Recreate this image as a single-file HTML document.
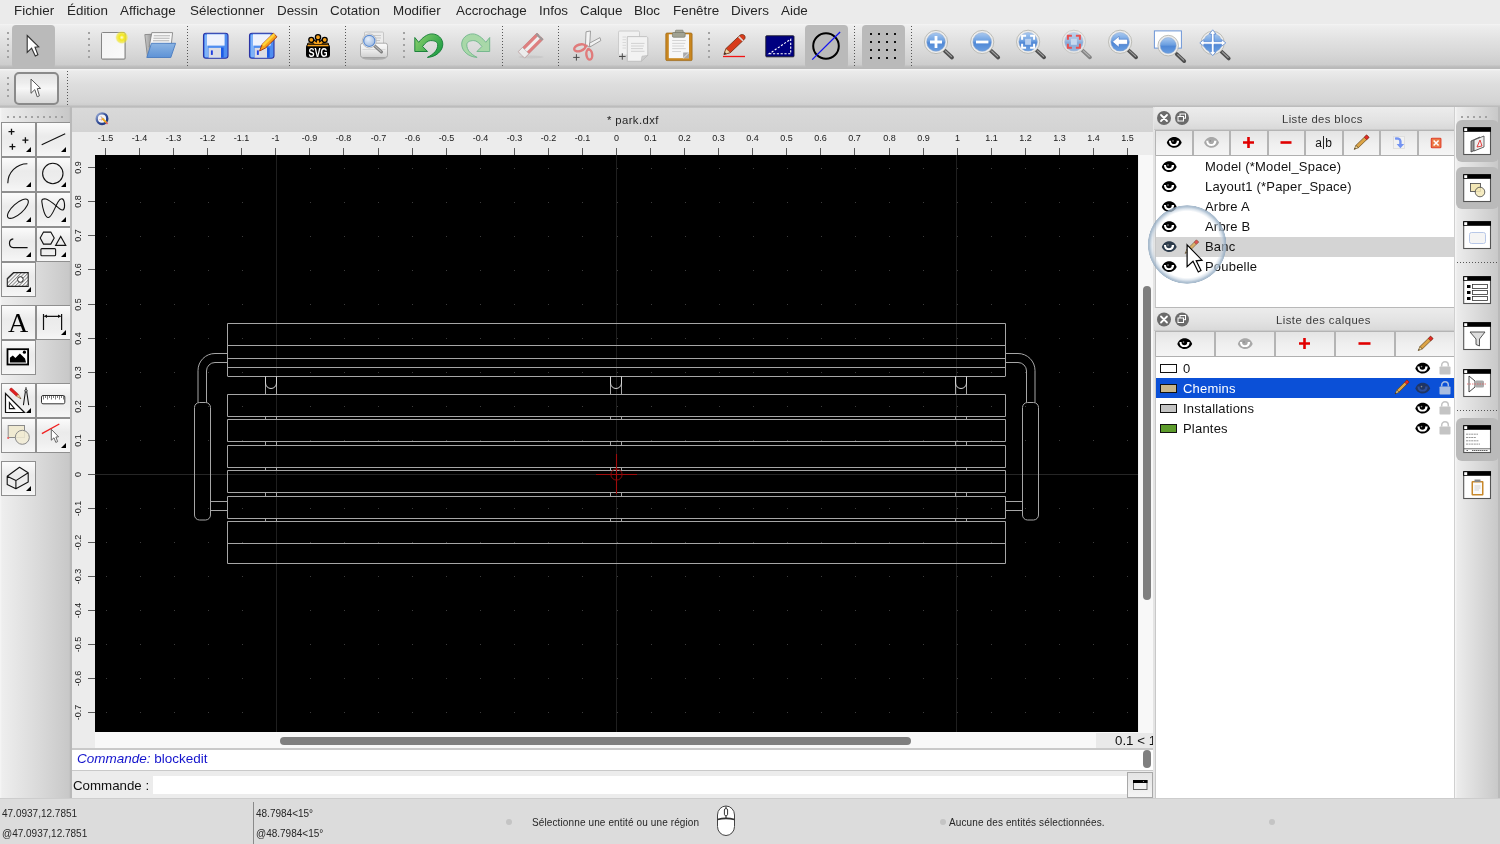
<!DOCTYPE html>
<html><head><meta charset="utf-8"><title>LibreCAD - park.dxf</title><style>
*{box-sizing:border-box;margin:0;padding:0}
html,body{width:1500px;height:844px;overflow:hidden;background:#ececec;font-family:"Liberation Sans",sans-serif}
body{position:relative}
.a{position:absolute}
.t{position:absolute;white-space:nowrap;line-height:1;will-change:transform}
svg{position:absolute;overflow:visible;will-change:transform}
#menubar{left:0;top:0;width:1500px;height:24px;background:#ebebeb}
#menubar .t{top:4px;font-size:13.4px;color:#262626}
#tb1{left:0;top:24px;width:1500px;height:44px;background:linear-gradient(#f4f4f4 0,#eeeeee 4%,#e2e2e2 35%,#d6d6d6 70%,#cdcdcd 92%,#c0c0c0 96%,#b8b8b8 100%)}
#tb2{left:0;top:68px;width:1500px;height:40px;background:linear-gradient(#b9b9b9 0,#b9b9b9 1px,#f7f7f7 1px,#f1f1f1 2px,#ebebeb 3px,#dedede 40%,#d4d4d4 85%,#cfcfcf 92%,#bdbdbd 95%,#bbbbbb 100%)}
.hdl{position:absolute;width:2px;background:radial-gradient(circle at 1px 1px,#a2a2a2 1px,transparent 1.2px) 0 0/2px 6px}
.hdlh{position:absolute;height:2px;background:radial-gradient(circle at 1px 1px,#a2a2a2 1px,transparent 1.2px) 0 0/6px 2px}
.sep{position:absolute;width:1px;background:linear-gradient(#555 50%,transparent 50%) 0 0/1px 3px}
.seph{position:absolute;height:1px;background:linear-gradient(90deg,#555 50%,transparent 50%) 0 0/3px 1px}
.pressed{position:absolute;background:#bababa;border-radius:5px}
#left{left:0;top:107px;width:71px;height:691px;background:linear-gradient(90deg,#f6f6f6 0,#eeeeee 2px,#d9d9d9 40px,#c8c8c8 69px,#b8b8b8 71px)}
.cell{position:absolute;width:36px;height:36px;border:1px solid #8f8f8f;background:linear-gradient(#fbfbfb,#ebebeb 40%,#eeeeee 70%,#f6f6f6)}
.tri{position:absolute;width:0;height:0;border-left:7px solid transparent;border-bottom:7px solid #000}
#status{left:0;top:799px;width:1500px;height:45px;background:#dcdcdc}
.st{font-size:10px;color:#262626}
</style></head><body>
<div id="menubar" class="a">
<span class="t" style="left:14px">Fichier</span>
<span class="t" style="left:67px">Édition</span>
<span class="t" style="left:120px">Affichage</span>
<span class="t" style="left:190px">Sélectionner</span>
<span class="t" style="left:277px">Dessin</span>
<span class="t" style="left:330px">Cotation</span>
<span class="t" style="left:393px">Modifier</span>
<span class="t" style="left:456px">Accrochage</span>
<span class="t" style="left:539px">Infos</span>
<span class="t" style="left:580px">Calque</span>
<span class="t" style="left:634px">Bloc</span>
<span class="t" style="left:673px">Fenêtre</span>
<span class="t" style="left:731px">Divers</span>
<span class="t" style="left:781px">Aide</span>
</div>
<div id="tb1" class="a"></div><div id="tb2" class="a"></div>
<div class="hdl" style="left:7px;top:32px;height:30px"></div>
<div class="hdl" style="left:88px;top:32px;height:30px"></div>
<div class="hdl" style="left:403px;top:32px;height:30px"></div>
<div class="hdl" style="left:708px;top:32px;height:30px"></div>
<div class="sep" style="left:187px;top:26px;height:41px"></div>
<div class="sep" style="left:289px;top:26px;height:41px"></div>
<div class="sep" style="left:345px;top:26px;height:41px"></div>
<div class="sep" style="left:502px;top:26px;height:41px"></div>
<div class="sep" style="left:558px;top:26px;height:41px"></div>
<div class="sep" style="left:854px;top:26px;height:41px"></div>
<div class="sep" style="left:911px;top:26px;height:41px"></div>
<div class="pressed" style="left:12px;top:25px;width:43px;height:43px;border-radius:4px"></div>
<div class="pressed" style="left:805px;top:25px;width:43px;height:43px;border-radius:4px"></div>
<div class="pressed" style="left:862px;top:25px;width:43px;height:43px;border-radius:4px"></div>
<svg style="left:20px;top:30px" width="25" height="30" viewBox="20 30 25 30" ><path d="M27.2,35.5 L38.7,46.9 L35,47.2 L37.9,54.8 L35.3,56.1 L31.6,48.2 L27.2,52.4 Z" fill="#fff" stroke="#333" stroke-width="1.1" stroke-linejoin="miter"/></svg>
<svg style="left:96px;top:28px" width="36" height="36" viewBox="96 28 36 36" ><defs><radialGradient id="glow"><stop offset="0" stop-color="#fffde0"/><stop offset="0.35" stop-color="#f4e81a"/><stop offset="0.75" stop-color="#efe31e" stop-opacity="0.6"/><stop offset="1" stop-color="#eee" stop-opacity="0"/></radialGradient>
<linearGradient id="pg" x1="0" y1="0" x2="1" y2="1"><stop offset="0" stop-color="#f2f2f2"/><stop offset="1" stop-color="#fafafa"/></linearGradient></defs>
<rect x="101.5" y="33.5" width="24" height="26" rx="1" fill="#999"/>
<rect x="101.5" y="32.5" width="23.5" height="26.5" rx="1" fill="url(#pg)" stroke="#858585" stroke-width="1"/>
<circle cx="121.8" cy="37.5" r="7" fill="url(#glow)"/></svg>
<svg style="left:140px;top:28px" width="40" height="34" viewBox="140 28 40 34" ><defs><linearGradient id="fg" x1="0" y1="0" x2="0" y2="1"><stop offset="0" stop-color="#8db5e3"/><stop offset="1" stop-color="#5d92d6"/></linearGradient>
<linearGradient id="bg2" x1="0" y1="0" x2="1" y2="0"><stop offset="0" stop-color="#c9c9c9"/><stop offset="1" stop-color="#8f8f8f"/></linearGradient></defs>
<path d="M144.8,34.6 L153,34.2 L150,56.5 L147.5,57.2 Z" fill="url(#bg2)" stroke="#727272" stroke-width="0.7" stroke-linejoin="round"/>
<path d="M151.8,32.6 L172.6,32.6 L171.4,43.4 L149.2,47 Z" fill="#f6f6f6" stroke="#7b7b7b" stroke-width="0.8" stroke-linejoin="round"/>
<path d="M153.8,35.8 L170,35.8 M153.4,38.3 L169.6,38.3 M153,40.8 L169.3,40.8" stroke="#b5b5b5" stroke-width="1.1"/>
<path d="M151.4,43.3 L175.6,43.3 L170.8,57.5 L146.8,57.5 Z" fill="url(#fg)" stroke="#4a7cc0" stroke-width="0.9" stroke-linejoin="round"/></svg>
<svg style="left:200px;top:30px" width="32" height="32" viewBox="200 30 32 32" ><rect x="203.5" y="33.3" width="24.5" height="25" rx="2.5" fill="#4f8df0" stroke="#2a33a4" stroke-width="1.1"/>
<rect x="205" y="35" width="3" height="22" fill="#7fb2f7"/>
<rect x="207" y="34.3" width="17.6" height="11.3" fill="#eef2fd"/>
<rect x="208.6" y="47.9" width="12.4" height="9.8" fill="#dcdce4"/>
<rect x="210.9" y="50.4" width="1.9" height="4.5" fill="#1f3fe0"/>
<rect x="221" y="47.5" width="2.6" height="10" fill="#1c5ae6"/></svg>
<svg style="left:246px;top:28px" width="34" height="34" viewBox="246 28 34 34" ><rect x="249.5" y="33.3" width="24.5" height="25" rx="2.5" fill="#4f8df0" stroke="#2a33a4" stroke-width="1.1"/>
<rect x="251" y="35" width="3" height="22" fill="#7fb2f7"/>
<rect x="253" y="34.3" width="17.6" height="11.3" fill="#eef2fd"/>
<rect x="254.6" y="47.9" width="12.4" height="9.8" fill="#dcdce4"/>
<rect x="256.9" y="50.4" width="1.9" height="4.5" fill="#1f3fe0"/>
<rect x="267" y="47.5" width="2.6" height="10" fill="#1c5ae6"/><path d="M259.6,51 L262,44.5 L273.5,33.2 L277,36.8 L265.5,48 Z" fill="#f9a21a" stroke="#a0300f" stroke-width="0.9"/>
<path d="M262,44.5 L273.5,33.2 L275.2,35 L263.8,46.3 Z" fill="#ffd43a"/></svg>
<svg style="left:302px;top:30px" width="32" height="32" viewBox="302 30 32 32" ><g stroke="#000" stroke-width="4.2" stroke-linecap="round"><path d="M318,45L318,37.5M318,45L311.5,40M318,45L324.5,40M318,45L309,44.5M318,45L327,44.5"/></g>
<g stroke="#f7a21b" stroke-width="2.2" stroke-linecap="round"><path d="M318,45L318,37.5M318,45L311.5,40M318,45L324.5,40M318,45L309,44.5M318,45L327,44.5"/></g>
<circle cx="318" cy="37.3" r="2.6" fill="#f7a21b" stroke="#000" stroke-width="1.3"/><circle cx="311.3" cy="39.8" r="2.5" fill="#f7a21b" stroke="#000" stroke-width="1.3"/><circle cx="324.7" cy="39.8" r="2.5" fill="#f7a21b" stroke="#000" stroke-width="1.3"/>
<rect x="306" y="44.3" width="24" height="13.5" rx="3" fill="#000"/><rect x="307.5" y="45" width="21" height="1.3" fill="#f7a21b"/>
<text x="0" y="0" font-family="Liberation Sans" font-weight="bold" font-size="13" fill="#fff" text-anchor="middle" transform="translate(318,56.8) scale(0.7,1)">SVG</text></svg>
<svg style="left:356px;top:28px" width="36" height="36" viewBox="356 28 36 36" ><defs><linearGradient id="prg" x1="0" y1="0" x2="0" y2="1"><stop offset="0" stop-color="#fbfbfb"/><stop offset="0.5" stop-color="#ececec"/><stop offset="1" stop-color="#cfcfcf"/></linearGradient>
<radialGradient id="lg" cx="0.4" cy="0.35" r="0.7"><stop offset="0" stop-color="#e8f0fb"/><stop offset="1" stop-color="#9bb8e0"/></radialGradient></defs>
<rect x="364.5" y="32" width="19" height="14" rx="1" fill="#ececec" stroke="#bdbdbd" stroke-width="0.8"/>
<path d="M372,35.5H381M372,38H381M372,40.5H380" stroke="#c9c9c9" stroke-width="1"/>
<ellipse cx="374" cy="58.3" rx="12" ry="1.6" fill="#8d8d8d" opacity="0.55"/>
<rect x="360.5" y="43.2" width="27" height="14.3" rx="2.2" fill="url(#prg)" stroke="#9a9a9a" stroke-width="0.8"/>
<path d="M362.5,49.5H385.5" stroke="#d2d2d2" stroke-width="0.8"/>
<path d="M374.3,45.6L381.4,51.9" stroke="#7d7d7d" stroke-width="3.2" stroke-linecap="round"/>
<path d="M374.8,45.8L381,51.3" stroke="#b9b9b9" stroke-width="1.1" stroke-linecap="round"/>
<circle cx="369.3" cy="40.9" r="7" fill="#f6f6f6" stroke="#a9a9a9" stroke-width="0.7"/>
<circle cx="369.3" cy="40.9" r="5.6" fill="url(#lg)" stroke="#5c8bd0" stroke-width="1.2"/></svg>
<svg style="left:410px;top:28px" width="38" height="34" viewBox="410 28 38 34" ><defs><linearGradient id="ug" x1="0" y1="0" x2="1" y2="0.6"><stop offset="0" stop-color="#8fd16e"/><stop offset="1" stop-color="#24a046"/></linearGradient></defs>
<path d="M414.8,37.5 L418.7,42.3 C422,38 427,33.9 431.8,33.9 C438,33.9 442.8,38.5 442.8,44.2 C442.8,51 436,57 427.4,57.4 C434,54 437.7,50 437.7,44.8 C437.7,42 435,40.6 430.7,40.6 C428,40.6 425,43 422.6,46.5 L427.6,51.5 L414.8,51.5 Z" fill="url(#ug)" stroke="#107a32" stroke-width="0.9" stroke-linejoin="round"/></svg>
<svg style="left:456px;top:28px" width="38" height="34" viewBox="456 28 38 34" ><g transform="translate(904.5,0) scale(-1,1)"><path d="M414.8,37.5 L418.7,42.3 C422,38 427,33.9 431.8,33.9 C438,33.9 442.8,38.5 442.8,44.2 C442.8,51 436,57 427.4,57.4 C434,54 437.7,50 437.7,44.8 C437.7,42 435,40.6 430.7,40.6 C428,40.6 425,43 422.6,46.5 L427.6,51.5 L414.8,51.5 Z" fill="#a8d8a8" stroke="#6fb48a" stroke-width="0.9" stroke-linejoin="round"/></g></svg>
<svg style="left:514px;top:28px" width="34" height="34" viewBox="514 28 34 34" ><ellipse cx="531" cy="57" rx="12.5" ry="1.5" fill="#c4c4c4" opacity="0.75"/>
<g transform="rotate(-45 530.5 45.5)"><rect x="517.5" y="41.2" width="26.5" height="9" rx="1" fill="#de7f7f" stroke="#c46a6a" stroke-width="0.5"/>
<rect x="517.5" y="44.2" width="26.5" height="3" fill="#efefef"/>
<rect x="541.8" y="41.2" width="2.2" height="9" fill="#9a9a9a"/>
<rect x="517.5" y="41.2" width="6" height="9" fill="#ececec" stroke="#a9a9a9" stroke-width="0.5"/></g></svg>
<svg style="left:568px;top:26px" width="38" height="38" viewBox="568 26 38 38" ><path d="M586,31.8L590.5,31L589.6,46.8L585.5,45Z" fill="#f4f4f4" stroke="#8b8b8b" stroke-width="0.8" stroke-linejoin="round"/>
<path d="M589.5,43.2L600,37.6L600.8,40.6L589.8,47Z" fill="#f2f2f2" stroke="#8b8b8b" stroke-width="0.8" stroke-linejoin="round"/>
<ellipse cx="579.8" cy="47.8" rx="5.8" ry="3.2" fill="none" stroke="#e07b7b" stroke-width="2.4" transform="rotate(-18 579.8 47.8)"/>
<path d="M584.5,46.2L587.5,45.8" stroke="#e07b7b" stroke-width="2.6"/>
<ellipse cx="589.3" cy="54.6" rx="2.9" ry="5.1" fill="none" stroke="#e07b7b" stroke-width="2.4" transform="rotate(-8 589.3 54.6)"/>
<path d="M588,48L589,50" stroke="#e07b7b" stroke-width="2.4"/>
<path d="M573.2,57.4H579.6M576.4,54.2V60.6" stroke="#4a4a4a" stroke-width="1"/></svg>
<svg style="left:614px;top:26px" width="38" height="38" viewBox="614 26 38 38" ><rect x="618.5" y="31" width="21" height="24.2" rx="1.2" fill="#f1f1f1" stroke="#c4c4c4" stroke-width="0.8"/>
<path d="M622.5,37H626M622.5,39.7H626M622.5,42.5H626M622.5,45.3H626M622.5,48H626" stroke="#d6d6d6" stroke-width="0.9"/>
<path d="M627.3,36.6H646.7L647.8,37.6V55.4L641.2,61.3H627.3Z" fill="#f2f2f2" stroke="#bdbdbd" stroke-width="0.9" stroke-linejoin="round"/>
<path d="M641.2,61.3L642,56.2L647.8,55.4Z" fill="#cfcfcf" stroke="#b5b5b5" stroke-width="0.6"/>
<path d="M631,43.4H644.5M631,46H643.8M631,48.6H643M631,51.3H644.5" stroke="#cdcdcd" stroke-width="0.9"/>
<path d="M619,56.5H625.6M622.3,53.3V59.7" stroke="#4a4a4a" stroke-width="1"/></svg>
<svg style="left:661px;top:26px" width="36" height="38" viewBox="661 26 36 38" ><rect x="665.8" y="33" width="26.3" height="27.6" rx="1.2" fill="#c9861f" stroke="#9a6414" stroke-width="0.7"/>
<path d="M668.8,34.3H689V58.2H668.8Z" fill="#f7f7f7"/>
<path d="M683.2,58.2V52.5H689Z" fill="#d8d8d8"/><path d="M683.2,58.2L689,52.5V58.2Z" fill="#c9861f" opacity="0"/>
<rect x="683.2" y="52.6" width="5.8" height="5.6" fill="#a9a9a9"/><path d="M683.2,58.2L689,52.6" stroke="#e8e8e8" stroke-width="1"/>
<rect x="675.4" y="30.2" width="7.8" height="3.5" rx="0.8" fill="#a8a898" stroke="#6d6e62" stroke-width="0.6"/>
<rect x="672.4" y="32.5" width="12.8" height="4.8" rx="1.2" fill="#a1a292" stroke="#6d6e62" stroke-width="0.6"/>
<path d="M672.2,40.5H685.8M672.2,43.4H685.2M672.2,46H684M672.2,48.6H685.8M672.2,51.5H681" stroke="#cfcfcf" stroke-width="0.9"/></svg>
<svg style="left:718px;top:30px" width="32" height="32" viewBox="718 30 32 32" ><path d="M723,56.5 L745,56.5" stroke="#f21414" stroke-width="1.3"/>
<path d="M724,54.5 L726,48.5 L740,35.2 C741.5,34 743.5,34.5 744.5,35.5 C745.3,36.5 745.4,38.3 744.2,39.5 L730.5,52.5 Z" fill="#d83c1c" stroke="#6b2a10" stroke-width="0.8"/>
<path d="M724,54.5 L726,48.5 L730.5,52.5 Z" fill="#f0d9a8" stroke="#6b2a10" stroke-width="0.6"/>
<path d="M724,54.5 L724.8,52.2 L726.4,53.6 Z" fill="#222"/>
<path d="M738.6,36.6 L743.2,41" stroke="#d9d9d9" stroke-width="1.6"/></svg>
<svg style="left:762px;top:32px" width="36" height="28" viewBox="762 32 36 28" ><rect x="765.8" y="35.8" width="28.2" height="21" rx="0.8" fill="#000080" stroke="#1a1a2a" stroke-width="0.9"/>
<path d="M769.2,53.8 L790.7,53.8 L790.7,39.2 Z" fill="none" stroke="#fff" stroke-width="1.1" stroke-dasharray="2.2,1.6"/></svg>
<svg style="left:808px;top:28px" width="38" height="38" viewBox="808 28 38 38" ><circle cx="826" cy="46" r="12.8" fill="none" stroke="#000" stroke-width="2"/>
<path d="M812.2,59.6 L840.1,32" stroke="#1414f0" stroke-width="1.3"/></svg>
<svg style="left:866px;top:30px" width="36" height="36" viewBox="866 30 36 36" ><rect x="870" y="33" width="2" height="2" fill="#111"/><rect x="870" y="41" width="2" height="2" fill="#111"/><rect x="870" y="49" width="2" height="2" fill="#111"/><rect x="870" y="57" width="2" height="2" fill="#111"/><rect x="878" y="33" width="2" height="2" fill="#111"/><rect x="878" y="41" width="2" height="2" fill="#111"/><rect x="878" y="49" width="2" height="2" fill="#111"/><rect x="878" y="57" width="2" height="2" fill="#111"/><rect x="886" y="33" width="2" height="2" fill="#111"/><rect x="886" y="41" width="2" height="2" fill="#111"/><rect x="886" y="49" width="2" height="2" fill="#111"/><rect x="886" y="57" width="2" height="2" fill="#111"/><rect x="894" y="33" width="2" height="2" fill="#111"/><rect x="894" y="41" width="2" height="2" fill="#111"/><rect x="894" y="49" width="2" height="2" fill="#111"/><rect x="894" y="57" width="2" height="2" fill="#111"/></svg>
<svg style="left:918px;top:26px" width="320" height="40" viewBox="918 26 320 40"><defs><linearGradient id="lensg" x1="0" y1="0" x2="0" y2="1"><stop offset="0" stop-color="#a9c9f0"/><stop offset="0.45" stop-color="#6c9fe0"/><stop offset="0.55" stop-color="#5088d6"/><stop offset="1" stop-color="#6a9ee0"/></linearGradient></defs><g><path d="M944.5,50.5 L952,57.5" stroke="#4f4f4f" stroke-width="3.8" stroke-linecap="round"/>
<path d="M945.5,51 L951.5,56.6" stroke="#a0a0a0" stroke-width="1.1" stroke-linecap="round"/>
<circle cx="936" cy="42" r="11.600000000000001" fill="#ececec" stroke="#b0b0a8" stroke-width="0.8"/>
<circle cx="936" cy="42" r="9.3" fill="url(#lensg)" stroke="#8aa6cc" stroke-width="0.5"/>
<path d="M936,36 L936,48 M930,42 L942,42" stroke="#fff" stroke-width="2.8"/></g><g><path d="M990.7,50.5 L998.2,57.5" stroke="#4f4f4f" stroke-width="3.8" stroke-linecap="round"/>
<path d="M991.7,51 L997.7,56.6" stroke="#a0a0a0" stroke-width="1.1" stroke-linecap="round"/>
<circle cx="982.2" cy="42" r="11.600000000000001" fill="#ececec" stroke="#b0b0a8" stroke-width="0.8"/>
<circle cx="982.2" cy="42" r="9.3" fill="url(#lensg)" stroke="#8aa6cc" stroke-width="0.5"/>
<path d="M976,42 L988.4,42" stroke="#fff" stroke-width="2.8"/></g><g><path d="M1036.6,50.3 L1044.1,57.3" stroke="#4f4f4f" stroke-width="3.8" stroke-linecap="round"/>
<path d="M1037.6,50.8 L1043.6,56.4" stroke="#a0a0a0" stroke-width="1.1" stroke-linecap="round"/>
<circle cx="1028.1" cy="41.8" r="11.600000000000001" fill="#ececec" stroke="#b0b0a8" stroke-width="0.8"/>
<circle cx="1028.1" cy="41.8" r="9.3" fill="url(#lensg)" stroke="#8aa6cc" stroke-width="0.5"/>
<rect x="1025.1" y="38.8" width="6" height="6" fill="#b8d0f0"/><path d="M1022.0999999999999,39.8 L1022.0999999999999,35.8 L1026.1,35.8 M1030.1,35.8 L1034.1,35.8 L1034.1,39.8 M1034.1,43.8 L1034.1,47.8 L1030.1,47.8 M1026.1,47.8 L1022.0999999999999,47.8 L1022.0999999999999,43.8" stroke="#fff" stroke-width="2" fill="none"/></g><g opacity="0.6"><path d="M1082.4,50.3 L1089.9,57.3" stroke="#4f4f4f" stroke-width="3.8" stroke-linecap="round"/>
<path d="M1083.4,50.8 L1089.4,56.4" stroke="#a0a0a0" stroke-width="1.1" stroke-linecap="round"/>
<circle cx="1073.9" cy="41.8" r="11.600000000000001" fill="#ececec" stroke="#b0b0a8" stroke-width="0.8"/>
<circle cx="1073.9" cy="41.8" r="9.3" fill="url(#lensg)" stroke="#8aa6cc" stroke-width="0.5"/>
</g><rect x="1070.9" y="38.8" width="6" height="6" fill="#c8d8ee"/><path d="M1067.9,39.8 L1067.9,35.8 L1071.9,35.8 M1075.9,35.8 L1079.9,35.8 L1079.9,39.8 M1079.9,43.8 L1079.9,47.8 L1075.9,47.8 M1071.9,47.8 L1067.9,47.8 L1067.9,43.8" stroke="#e85050" stroke-width="2" fill="none"/><g><path d="M1128.6,50.3 L1136.1,57.3" stroke="#4f4f4f" stroke-width="3.8" stroke-linecap="round"/>
<path d="M1129.6,50.8 L1135.6,56.4" stroke="#a0a0a0" stroke-width="1.1" stroke-linecap="round"/>
<circle cx="1120.1" cy="41.8" r="11.600000000000001" fill="#ececec" stroke="#b0b0a8" stroke-width="0.8"/>
<circle cx="1120.1" cy="41.8" r="9.3" fill="url(#lensg)" stroke="#8aa6cc" stroke-width="0.5"/>
<path d="M1112.5,41.8 L1119,36.3 L1119,39.3 L1127.5,39.3 L1127.5,44.3 L1119,44.3 L1119,47.3 Z" fill="#fff" stroke="#3a6cc0" stroke-width="0.5"/></g><rect x="1154.4" y="30.9" width="27" height="17.2" fill="#fff" stroke="#6d96d8" stroke-width="1"/><g><path d="M1176.7,54.1 L1184.2,61.1" stroke="#4f4f4f" stroke-width="3.8" stroke-linecap="round"/>
<path d="M1177.7,54.6 L1183.7,60.2" stroke="#a0a0a0" stroke-width="1.1" stroke-linecap="round"/>
<circle cx="1168.2" cy="45.6" r="10.3" fill="#ececec" stroke="#b0b0a8" stroke-width="0.8"/>
<circle cx="1168.2" cy="45.6" r="8" fill="url(#lensg)" stroke="#8aa6cc" stroke-width="0.5"/>
</g><g><path d="M1221.2,51.4 L1228.7,58.4" stroke="#4f4f4f" stroke-width="3.8" stroke-linecap="round"/>
<path d="M1222.2,51.9 L1228.2,57.5" stroke="#a0a0a0" stroke-width="1.1" stroke-linecap="round"/>
<circle cx="1212.7" cy="42.9" r="11.600000000000001" fill="#ececec" stroke="#b0b0a8" stroke-width="0.8"/>
<circle cx="1212.7" cy="42.9" r="9.3" fill="url(#lensg)" stroke="#8aa6cc" stroke-width="0.5"/>
<path d="M1212.7,29.8 L1216,34 L1214,34 L1214,41.6 L1221.6,41.6 L1221.6,39.6 L1225.8,42.9 L1221.6,46.2 L1221.6,44.2 L1214,44.2 L1214,51.8 L1216,51.8 L1212.7,55.6 L1209.4,51.8 L1211.4,51.8 L1211.4,44.2 L1203.8,44.2 L1203.8,46.2 L1199.8,42.9 L1203.8,39.6 L1203.8,41.6 L1211.4,41.6 L1211.4,34 L1209.4,34 Z" fill="#fff" stroke="#4a7ed0" stroke-width="0.7"/></g></svg>
<div class="hdl" style="left:7px;top:77px;height:24px"></div>
<div class="a" style="left:14px;top:72px;width:45px;height:33px;border:2px solid #8a8a8a;border-radius:5px;background:linear-gradient(#e4e4e4,#ededed 30%,#f7f7f7 50%,#e6e6e6 75%,#d9d9d9)"></div>
<svg style="left:26px;top:76px" width="20" height="24" viewBox="26 76 20 24" ><path d="M31,79.1 L40.6,88.4 L37.3,88.6 L39.4,95.8 L37.2,96.8 L34.8,89.6 L31,93.3 Z" fill="#fff" stroke="#555" stroke-width="1"/></svg>
<div class="sep" style="left:67px;top:71px;height:34px"></div>
<div id="left" class="a"></div>
<div class="a" style="left:0;top:107px;width:71px;height:1px;background:#c6c6c6"></div>
<div class="hdlh" style="left:7px;top:116px;width:60px"></div>
<div class="cell" style="left:1px;top:122px;width:35px;height:35px"></div>
<div class="cell" style="left:36px;top:122px;width:35px;height:35px"></div>
<div class="cell" style="left:1px;top:157px;width:35px;height:35px"></div>
<div class="cell" style="left:36px;top:157px;width:35px;height:35px"></div>
<div class="cell" style="left:1px;top:192px;width:35px;height:35px"></div>
<div class="cell" style="left:36px;top:192px;width:35px;height:35px"></div>
<div class="cell" style="left:1px;top:227px;width:35px;height:35px"></div>
<div class="cell" style="left:36px;top:227px;width:35px;height:35px"></div>
<div class="cell" style="left:1px;top:262px;width:35px;height:35px"></div>
<div class="cell" style="left:1px;top:305px;width:35px;height:35px"></div>
<div class="cell" style="left:36px;top:305px;width:35px;height:35px"></div>
<div class="cell" style="left:1px;top:340px;width:35px;height:35px"></div>
<div class="cell" style="left:1px;top:383px;width:35px;height:35px"></div>
<div class="cell" style="left:36px;top:383px;width:35px;height:35px"></div>
<div class="cell" style="left:1px;top:418px;width:35px;height:35px"></div>
<div class="cell" style="left:36px;top:418px;width:35px;height:35px"></div>
<div class="cell" style="left:1px;top:461px;width:35px;height:35px"></div>
<div class="tri" style="left:26px;top:147px;border-left-width:5px;border-bottom-width:5px"></div>
<div class="tri" style="left:61px;top:147px;border-left-width:5px;border-bottom-width:5px"></div>
<div class="tri" style="left:26px;top:182px;border-left-width:5px;border-bottom-width:5px"></div>
<div class="tri" style="left:61px;top:182px;border-left-width:5px;border-bottom-width:5px"></div>
<div class="tri" style="left:26px;top:217px;border-left-width:5px;border-bottom-width:5px"></div>
<div class="tri" style="left:61px;top:217px;border-left-width:5px;border-bottom-width:5px"></div>
<div class="tri" style="left:26px;top:252px;border-left-width:5px;border-bottom-width:5px"></div>
<div class="tri" style="left:61px;top:252px;border-left-width:5px;border-bottom-width:5px"></div>
<div class="tri" style="left:26px;top:287px;border-left-width:5px;border-bottom-width:5px"></div>
<div class="tri" style="left:61px;top:330px;border-left-width:5px;border-bottom-width:5px"></div>
<div class="tri" style="left:26px;top:408px;border-left-width:5px;border-bottom-width:5px"></div>
<div class="tri" style="left:61px;top:443px;border-left-width:5px;border-bottom-width:5px"></div>
<div class="tri" style="left:26px;top:486px;border-left-width:5px;border-bottom-width:5px"></div>
<svg style="left:0;top:120px" width="72" height="380" viewBox="0 120 72 380"><g fill="none" stroke="#111" stroke-width="1.1"><path d="M8.5,131.7H14.5M11.5,128.7V134.7" stroke-width="1.3"/><path d="M22.4,140.2H28.4M25.4,137.2V143.2" stroke-width="1.3"/><path d="M9.4,146.7H15.4M12.4,143.7V149.7" stroke-width="1.3"/><path d="M41.7,144.8L65.2,133.7"/><path d="M7.8,183.3A19.6,19.6 0 0 1 27.4,163.7"/><circle cx="52.8" cy="173.5" r="10.2"/><ellipse cx="17.9" cy="208.7" rx="13.2" ry="5.2" transform="rotate(-42 17.9 208.7)"/><path d="M41.8,201.5 C42.5,208 45,218 48.5,217.5 C52,217 55,207 58,202 C61,197 64,198 64.5,204 C65,210 63,211 60,209 C56,206 50,200 46,199 C43,198.5 41.5,199.5 41.8,201.5Z"/><path d="M13.3,238.8A4.5,4.5 0 0 0 13.3,247.7H27.6" stroke-width="1.2"/><path d="M43.5,232.1H50.8L54.2,238.1L50.8,244.1H43.5L40.2,238.1Z"/><path d="M55.6,245.4H65.8L60.7,236.4Z"/><rect x="40.9" y="248.6" width="14.7" height="7.1" rx="1"/></g><defs><pattern id="hp" width="2.5" height="2.5" patternUnits="userSpaceOnUse" patternTransform="rotate(45)"><rect width="2.5" height="2.5" fill="#fff"/><rect width="1" height="2.5" fill="#888"/></pattern></defs><path d="M13.5,272.6H28.2V286.4H7.3V278.6Z" fill="url(#hp)" stroke="#222" stroke-width="1.1"/><circle cx="20.4" cy="279.5" r="2.8" fill="#fff" stroke="#222" stroke-width="1"/><text x="18" y="331.7" font-family="Liberation Serif" font-size="28" text-anchor="middle" fill="#000">A</text><path d="M43.5,314V330M61.6,314V330M44.5,316.3H60.5" stroke="#111" stroke-width="1.2" fill="none"/><path d="M44,316.3L47,314.6V318Z M61,316.3L58,314.6V318Z" fill="#111"/><rect x="7.5" y="349.2" width="20.6" height="15.3" fill="#fff" stroke="#000" stroke-width="1.8"/><path d="M9.9,362.5V357.8L12.8,355.5L15.4,358L19.9,353.6L25,358.5L26,362.5Z" fill="#000"/><circle cx="24.4" cy="352.2" r="1.6" fill="#000"/><path d="M5.5,393.5V412.5H24.5Z" fill="#fff" stroke="#111" stroke-width="1.2"/><path d="M9.4,402.6V408.6H14.5Z" fill="none" stroke="#111" stroke-width="1.1"/><path d="M9.8,390.2C9.4,389 10.6,387.8 11.8,388.2L18.4,394.2L16.4,396.2Z" fill="#e02020" stroke="#a01010" stroke-width="0.5"/><path d="M18.4,394.2L21,398.9L16.4,396.2Z" fill="#efc9a0" stroke="#7a5020" stroke-width="0.5"/><path d="M21,398.9L19.6,398.1L20.2,397.4Z" fill="#222"/><path d="M23.4,405.2L25.4,391.5M28.7,405.2L26.7,391.5M26,387.2V390" stroke="#111" stroke-width="1.05" fill="none"/><circle cx="26" cy="390.8" r="1.2" fill="#fff" stroke="#111" stroke-width="0.9"/><rect x="41.5" y="395.5" width="23.3" height="8.3" rx="1.5" fill="#fff" stroke="#333" stroke-width="1"/><path d="M43.5,396V399.5M45.5,396V398M47.5,396V399.5M49.5,396V398M51.5,396V399.5M53.5,396V398M55.5,396V399.5M57.5,396V398M59.5,396V399.5M61.5,396V398M63.5,396V399.5" stroke="#444" stroke-width="0.7"/><rect x="8.2" y="425.5" width="16.3" height="12" fill="#f0ead2" stroke="#8a8a8a" stroke-width="1"/><circle cx="22.3" cy="437.3" r="7" fill="#f1ebd3" fill-opacity="0.85" stroke="#8a8a8a" stroke-width="1"/><circle cx="8.2" cy="438" r="1.1" fill="#f06060"/><path d="M41.9,433.7L59.3,424" stroke="#f02020" stroke-width="1.4"/><path d="M51.3,429.3L58.6,436.8L55.9,437L57.6,441.6L55.8,442.4L54,437.8L51.3,440.2Z" fill="#fff" stroke="#555" stroke-width="0.9"/><path d="M7.2,476.3L19.5,467.3L28.2,472.7L15.9,480.6Z M7.2,476.3V484.6L15.9,488.8V480.6 M28.2,472.7V482.1L15.9,488.8" fill="none" stroke="#111" stroke-width="1.1" stroke-linejoin="round"/></svg>
<div class="a" style="left:71px;top:107px;width:1084px;height:1px;background:#c4c4c4"></div>
<div class="a" style="left:71px;top:108px;width:1083px;height:24px;background:linear-gradient(#d9d9d9,#d3d3d3)"></div>
<div class="a" style="left:70px;top:107px;width:2px;height:691px;background:#b9b9b9"></div>
<div class="a" style="left:1153px;top:107px;width:2px;height:691px;background:#e4e4e4"></div>
<div class="t" style="left:607px;top:115px;font-size:11.3px;color:#262626;letter-spacing:0.4px">* park.dxf</div>
<svg style="left:94px;top:110px" width="17" height="17" viewBox="94 110 17 17">
<defs><linearGradient id="tig" x1="0" y1="0" x2="1" y2="1"><stop offset="0" stop-color="#9fb0d8"/><stop offset="0.5" stop-color="#2f4b95"/><stop offset="1" stop-color="#1e3580"/></linearGradient></defs>
<circle cx="102" cy="118.7" r="5.3" fill="#f4f4f6" stroke="url(#tig)" stroke-width="2.4"/>
<path d="M99,119.5H104M101.5,116.5V121" stroke="#d99" stroke-width="0.5"/><path d="M100.5,116.5L104.5,119" stroke="#999" stroke-width="0.5"/>
<path d="M102.2,118.4L106.4,122.6" stroke="#f0a818" stroke-width="2"/><path d="M106.2,122.4L107.6,123.8" stroke="#e06060" stroke-width="1.8"/></svg>
<div class="a" style="left:72px;top:132px;width:1081px;height:23px;background:#ececec"></div>
<div class="a" style="left:72px;top:155px;width:23px;height:577px;background:#ececec"></div>
<svg style="left:95px;top:155px" width="1043" height="577" viewBox="95 155 1043 577"><rect x="95" y="155" width="1043" height="577" fill="#000"/><path d="M106,712h1v1h-1zM106,678h1v1h-1zM106,644h1v1h-1zM106,610h1v1h-1zM106,576h1v1h-1zM106,542h1v1h-1zM106,508h1v1h-1zM106,474h1v1h-1zM106,440h1v1h-1zM106,406h1v1h-1zM106,372h1v1h-1zM106,338h1v1h-1zM106,304h1v1h-1zM106,270h1v1h-1zM106,236h1v1h-1zM106,202h1v1h-1zM106,168h1v1h-1zM140,712h1v1h-1zM140,678h1v1h-1zM140,644h1v1h-1zM140,610h1v1h-1zM140,576h1v1h-1zM140,542h1v1h-1zM140,508h1v1h-1zM140,474h1v1h-1zM140,440h1v1h-1zM140,406h1v1h-1zM140,372h1v1h-1zM140,338h1v1h-1zM140,304h1v1h-1zM140,270h1v1h-1zM140,236h1v1h-1zM140,202h1v1h-1zM140,168h1v1h-1zM174,712h1v1h-1zM174,678h1v1h-1zM174,644h1v1h-1zM174,610h1v1h-1zM174,576h1v1h-1zM174,542h1v1h-1zM174,508h1v1h-1zM174,474h1v1h-1zM174,440h1v1h-1zM174,406h1v1h-1zM174,372h1v1h-1zM174,338h1v1h-1zM174,304h1v1h-1zM174,270h1v1h-1zM174,236h1v1h-1zM174,202h1v1h-1zM174,168h1v1h-1zM208,712h1v1h-1zM208,678h1v1h-1zM208,644h1v1h-1zM208,610h1v1h-1zM208,576h1v1h-1zM208,542h1v1h-1zM208,508h1v1h-1zM208,474h1v1h-1zM208,440h1v1h-1zM208,406h1v1h-1zM208,372h1v1h-1zM208,338h1v1h-1zM208,304h1v1h-1zM208,270h1v1h-1zM208,236h1v1h-1zM208,202h1v1h-1zM208,168h1v1h-1zM242,712h1v1h-1zM242,678h1v1h-1zM242,644h1v1h-1zM242,610h1v1h-1zM242,576h1v1h-1zM242,542h1v1h-1zM242,508h1v1h-1zM242,474h1v1h-1zM242,440h1v1h-1zM242,406h1v1h-1zM242,372h1v1h-1zM242,338h1v1h-1zM242,304h1v1h-1zM242,270h1v1h-1zM242,236h1v1h-1zM242,202h1v1h-1zM242,168h1v1h-1zM276,712h1v1h-1zM276,678h1v1h-1zM276,644h1v1h-1zM276,610h1v1h-1zM276,576h1v1h-1zM276,542h1v1h-1zM276,508h1v1h-1zM276,474h1v1h-1zM276,440h1v1h-1zM276,406h1v1h-1zM276,372h1v1h-1zM276,338h1v1h-1zM276,304h1v1h-1zM276,270h1v1h-1zM276,236h1v1h-1zM276,202h1v1h-1zM276,168h1v1h-1zM310,712h1v1h-1zM310,678h1v1h-1zM310,644h1v1h-1zM310,610h1v1h-1zM310,576h1v1h-1zM310,542h1v1h-1zM310,508h1v1h-1zM310,474h1v1h-1zM310,440h1v1h-1zM310,406h1v1h-1zM310,372h1v1h-1zM310,338h1v1h-1zM310,304h1v1h-1zM310,270h1v1h-1zM310,236h1v1h-1zM310,202h1v1h-1zM310,168h1v1h-1zM344,712h1v1h-1zM344,678h1v1h-1zM344,644h1v1h-1zM344,610h1v1h-1zM344,576h1v1h-1zM344,542h1v1h-1zM344,508h1v1h-1zM344,474h1v1h-1zM344,440h1v1h-1zM344,406h1v1h-1zM344,372h1v1h-1zM344,338h1v1h-1zM344,304h1v1h-1zM344,270h1v1h-1zM344,236h1v1h-1zM344,202h1v1h-1zM344,168h1v1h-1zM378,712h1v1h-1zM378,678h1v1h-1zM378,644h1v1h-1zM378,610h1v1h-1zM378,576h1v1h-1zM378,542h1v1h-1zM378,508h1v1h-1zM378,474h1v1h-1zM378,440h1v1h-1zM378,406h1v1h-1zM378,372h1v1h-1zM378,338h1v1h-1zM378,304h1v1h-1zM378,270h1v1h-1zM378,236h1v1h-1zM378,202h1v1h-1zM378,168h1v1h-1zM412,712h1v1h-1zM412,678h1v1h-1zM412,644h1v1h-1zM412,610h1v1h-1zM412,576h1v1h-1zM412,542h1v1h-1zM412,508h1v1h-1zM412,474h1v1h-1zM412,440h1v1h-1zM412,406h1v1h-1zM412,372h1v1h-1zM412,338h1v1h-1zM412,304h1v1h-1zM412,270h1v1h-1zM412,236h1v1h-1zM412,202h1v1h-1zM412,168h1v1h-1zM446,712h1v1h-1zM446,678h1v1h-1zM446,644h1v1h-1zM446,610h1v1h-1zM446,576h1v1h-1zM446,542h1v1h-1zM446,508h1v1h-1zM446,474h1v1h-1zM446,440h1v1h-1zM446,406h1v1h-1zM446,372h1v1h-1zM446,338h1v1h-1zM446,304h1v1h-1zM446,270h1v1h-1zM446,236h1v1h-1zM446,202h1v1h-1zM446,168h1v1h-1zM480,712h1v1h-1zM480,678h1v1h-1zM480,644h1v1h-1zM480,610h1v1h-1zM480,576h1v1h-1zM480,542h1v1h-1zM480,508h1v1h-1zM480,474h1v1h-1zM480,440h1v1h-1zM480,406h1v1h-1zM480,372h1v1h-1zM480,338h1v1h-1zM480,304h1v1h-1zM480,270h1v1h-1zM480,236h1v1h-1zM480,202h1v1h-1zM480,168h1v1h-1zM514,712h1v1h-1zM514,678h1v1h-1zM514,644h1v1h-1zM514,610h1v1h-1zM514,576h1v1h-1zM514,542h1v1h-1zM514,508h1v1h-1zM514,474h1v1h-1zM514,440h1v1h-1zM514,406h1v1h-1zM514,372h1v1h-1zM514,338h1v1h-1zM514,304h1v1h-1zM514,270h1v1h-1zM514,236h1v1h-1zM514,202h1v1h-1zM514,168h1v1h-1zM548,712h1v1h-1zM548,678h1v1h-1zM548,644h1v1h-1zM548,610h1v1h-1zM548,576h1v1h-1zM548,542h1v1h-1zM548,508h1v1h-1zM548,474h1v1h-1zM548,440h1v1h-1zM548,406h1v1h-1zM548,372h1v1h-1zM548,338h1v1h-1zM548,304h1v1h-1zM548,270h1v1h-1zM548,236h1v1h-1zM548,202h1v1h-1zM548,168h1v1h-1zM582,712h1v1h-1zM582,678h1v1h-1zM582,644h1v1h-1zM582,610h1v1h-1zM582,576h1v1h-1zM582,542h1v1h-1zM582,508h1v1h-1zM582,474h1v1h-1zM582,440h1v1h-1zM582,406h1v1h-1zM582,372h1v1h-1zM582,338h1v1h-1zM582,304h1v1h-1zM582,270h1v1h-1zM582,236h1v1h-1zM582,202h1v1h-1zM582,168h1v1h-1zM617,712h1v1h-1zM617,678h1v1h-1zM617,644h1v1h-1zM617,610h1v1h-1zM617,576h1v1h-1zM617,542h1v1h-1zM617,508h1v1h-1zM617,474h1v1h-1zM617,440h1v1h-1zM617,406h1v1h-1zM617,372h1v1h-1zM617,338h1v1h-1zM617,304h1v1h-1zM617,270h1v1h-1zM617,236h1v1h-1zM617,202h1v1h-1zM617,168h1v1h-1zM651,712h1v1h-1zM651,678h1v1h-1zM651,644h1v1h-1zM651,610h1v1h-1zM651,576h1v1h-1zM651,542h1v1h-1zM651,508h1v1h-1zM651,474h1v1h-1zM651,440h1v1h-1zM651,406h1v1h-1zM651,372h1v1h-1zM651,338h1v1h-1zM651,304h1v1h-1zM651,270h1v1h-1zM651,236h1v1h-1zM651,202h1v1h-1zM651,168h1v1h-1zM685,712h1v1h-1zM685,678h1v1h-1zM685,644h1v1h-1zM685,610h1v1h-1zM685,576h1v1h-1zM685,542h1v1h-1zM685,508h1v1h-1zM685,474h1v1h-1zM685,440h1v1h-1zM685,406h1v1h-1zM685,372h1v1h-1zM685,338h1v1h-1zM685,304h1v1h-1zM685,270h1v1h-1zM685,236h1v1h-1zM685,202h1v1h-1zM685,168h1v1h-1zM719,712h1v1h-1zM719,678h1v1h-1zM719,644h1v1h-1zM719,610h1v1h-1zM719,576h1v1h-1zM719,542h1v1h-1zM719,508h1v1h-1zM719,474h1v1h-1zM719,440h1v1h-1zM719,406h1v1h-1zM719,372h1v1h-1zM719,338h1v1h-1zM719,304h1v1h-1zM719,270h1v1h-1zM719,236h1v1h-1zM719,202h1v1h-1zM719,168h1v1h-1zM753,712h1v1h-1zM753,678h1v1h-1zM753,644h1v1h-1zM753,610h1v1h-1zM753,576h1v1h-1zM753,542h1v1h-1zM753,508h1v1h-1zM753,474h1v1h-1zM753,440h1v1h-1zM753,406h1v1h-1zM753,372h1v1h-1zM753,338h1v1h-1zM753,304h1v1h-1zM753,270h1v1h-1zM753,236h1v1h-1zM753,202h1v1h-1zM753,168h1v1h-1zM787,712h1v1h-1zM787,678h1v1h-1zM787,644h1v1h-1zM787,610h1v1h-1zM787,576h1v1h-1zM787,542h1v1h-1zM787,508h1v1h-1zM787,474h1v1h-1zM787,440h1v1h-1zM787,406h1v1h-1zM787,372h1v1h-1zM787,338h1v1h-1zM787,304h1v1h-1zM787,270h1v1h-1zM787,236h1v1h-1zM787,202h1v1h-1zM787,168h1v1h-1zM821,712h1v1h-1zM821,678h1v1h-1zM821,644h1v1h-1zM821,610h1v1h-1zM821,576h1v1h-1zM821,542h1v1h-1zM821,508h1v1h-1zM821,474h1v1h-1zM821,440h1v1h-1zM821,406h1v1h-1zM821,372h1v1h-1zM821,338h1v1h-1zM821,304h1v1h-1zM821,270h1v1h-1zM821,236h1v1h-1zM821,202h1v1h-1zM821,168h1v1h-1zM855,712h1v1h-1zM855,678h1v1h-1zM855,644h1v1h-1zM855,610h1v1h-1zM855,576h1v1h-1zM855,542h1v1h-1zM855,508h1v1h-1zM855,474h1v1h-1zM855,440h1v1h-1zM855,406h1v1h-1zM855,372h1v1h-1zM855,338h1v1h-1zM855,304h1v1h-1zM855,270h1v1h-1zM855,236h1v1h-1zM855,202h1v1h-1zM855,168h1v1h-1zM889,712h1v1h-1zM889,678h1v1h-1zM889,644h1v1h-1zM889,610h1v1h-1zM889,576h1v1h-1zM889,542h1v1h-1zM889,508h1v1h-1zM889,474h1v1h-1zM889,440h1v1h-1zM889,406h1v1h-1zM889,372h1v1h-1zM889,338h1v1h-1zM889,304h1v1h-1zM889,270h1v1h-1zM889,236h1v1h-1zM889,202h1v1h-1zM889,168h1v1h-1zM923,712h1v1h-1zM923,678h1v1h-1zM923,644h1v1h-1zM923,610h1v1h-1zM923,576h1v1h-1zM923,542h1v1h-1zM923,508h1v1h-1zM923,474h1v1h-1zM923,440h1v1h-1zM923,406h1v1h-1zM923,372h1v1h-1zM923,338h1v1h-1zM923,304h1v1h-1zM923,270h1v1h-1zM923,236h1v1h-1zM923,202h1v1h-1zM923,168h1v1h-1zM957,712h1v1h-1zM957,678h1v1h-1zM957,644h1v1h-1zM957,610h1v1h-1zM957,576h1v1h-1zM957,542h1v1h-1zM957,508h1v1h-1zM957,474h1v1h-1zM957,440h1v1h-1zM957,406h1v1h-1zM957,372h1v1h-1zM957,338h1v1h-1zM957,304h1v1h-1zM957,270h1v1h-1zM957,236h1v1h-1zM957,202h1v1h-1zM957,168h1v1h-1zM991,712h1v1h-1zM991,678h1v1h-1zM991,644h1v1h-1zM991,610h1v1h-1zM991,576h1v1h-1zM991,542h1v1h-1zM991,508h1v1h-1zM991,474h1v1h-1zM991,440h1v1h-1zM991,406h1v1h-1zM991,372h1v1h-1zM991,338h1v1h-1zM991,304h1v1h-1zM991,270h1v1h-1zM991,236h1v1h-1zM991,202h1v1h-1zM991,168h1v1h-1zM1025,712h1v1h-1zM1025,678h1v1h-1zM1025,644h1v1h-1zM1025,610h1v1h-1zM1025,576h1v1h-1zM1025,542h1v1h-1zM1025,508h1v1h-1zM1025,474h1v1h-1zM1025,440h1v1h-1zM1025,406h1v1h-1zM1025,372h1v1h-1zM1025,338h1v1h-1zM1025,304h1v1h-1zM1025,270h1v1h-1zM1025,236h1v1h-1zM1025,202h1v1h-1zM1025,168h1v1h-1zM1059,712h1v1h-1zM1059,678h1v1h-1zM1059,644h1v1h-1zM1059,610h1v1h-1zM1059,576h1v1h-1zM1059,542h1v1h-1zM1059,508h1v1h-1zM1059,474h1v1h-1zM1059,440h1v1h-1zM1059,406h1v1h-1zM1059,372h1v1h-1zM1059,338h1v1h-1zM1059,304h1v1h-1zM1059,270h1v1h-1zM1059,236h1v1h-1zM1059,202h1v1h-1zM1059,168h1v1h-1zM1093,712h1v1h-1zM1093,678h1v1h-1zM1093,644h1v1h-1zM1093,610h1v1h-1zM1093,576h1v1h-1zM1093,542h1v1h-1zM1093,508h1v1h-1zM1093,474h1v1h-1zM1093,440h1v1h-1zM1093,406h1v1h-1zM1093,372h1v1h-1zM1093,338h1v1h-1zM1093,304h1v1h-1zM1093,270h1v1h-1zM1093,236h1v1h-1zM1093,202h1v1h-1zM1093,168h1v1h-1zM1127,712h1v1h-1zM1127,678h1v1h-1zM1127,644h1v1h-1zM1127,610h1v1h-1zM1127,576h1v1h-1zM1127,542h1v1h-1zM1127,508h1v1h-1zM1127,474h1v1h-1zM1127,440h1v1h-1zM1127,406h1v1h-1zM1127,372h1v1h-1zM1127,338h1v1h-1zM1127,304h1v1h-1zM1127,270h1v1h-1zM1127,236h1v1h-1zM1127,202h1v1h-1zM1127,168h1v1h-1z" fill="#3c3c3c"/><rect x="276" y="155" width="1" height="577" fill="#1f1f1f"/><rect x="616" y="155" width="1" height="577" fill="#1f1f1f"/><rect x="956" y="155" width="1" height="577" fill="#1f1f1f"/><rect x="95" y="474" width="1043" height="1" fill="#262626"/><path d="M227.5,323.5H1005.5M227.5,345.5H1005.5M227.5,358.5H1005.5M227.5,367.5H1005.5M227.5,376.5H1005.5M227.5,323.5V376M1005.5,323.5V376M227.5,394.5H1005.5M227.5,416.5H1005.5M227.5,394.5V416.5M1005.5,394.5V416.5M227.5,419.5H1005.5M227.5,441.5H1005.5M227.5,419.5V441.5M1005.5,419.5V441.5M227.5,445.5H1005.5M227.5,467.5H1005.5M227.5,445.5V467.5M1005.5,445.5V467.5M227.5,470.5H1005.5M227.5,492.5H1005.5M227.5,470.5V492.5M1005.5,470.5V492.5M227.5,496.5H1005.5M227.5,518.5H1005.5M227.5,496.5V518.5M1005.5,496.5V518.5M227.5,521.5H1005.5M227.5,563.5H1005.5M227.5,521.5V563.5M1005.5,521.5V563.5M227.5,543.5H1005.5M265.5,383V394M276.5,383V394M265.5,416.5V419.5M276.5,419.5V416.5M265.5,441.5V445.5M276.5,445.5V441.5M265.5,467.5V470.5M276.5,470.5V467.5M265.5,492.5V496.5M276.5,496.5V492.5M265.5,518.5V521.5M276.5,521.5V518.5M610.5,383V394M621.5,383V394M610.5,416.5V419.5M621.5,419.5V416.5M610.5,441.5V445.5M621.5,445.5V441.5M610.5,467.5V470.5M621.5,470.5V467.5M610.5,492.5V496.5M621.5,496.5V492.5M610.5,518.5V521.5M621.5,521.5V518.5M955.5,383V394M966.5,383V394M955.5,416.5V419.5M966.5,419.5V416.5M955.5,441.5V445.5M966.5,445.5V441.5M955.5,467.5V470.5M966.5,470.5V467.5M955.5,492.5V496.5M966.5,496.5V492.5M955.5,518.5V521.5M966.5,521.5V518.5M227.5,353.5H215A17,17 0 0 0 198,370.5V402.5M227.5,362.5H215A8.5,8.5 0 0 0 206.5,371V402.5M199.5,402.5H205.5A5,5 0 0 1 210.5,407.5V515A5,5 0 0 1 205.5,520H199.5A5,5 0 0 1 194.5,515V407.5A5,5 0 0 1 199.5,402.5ZM210.5,501.5H227.5M210.5,510.5H227.5M1005.5,353.5H1018A17,17 0 0 1 1035,370.5V402.5M1005.5,362.5H1018A8.5,8.5 0 0 1 1026.5,371V402.5M1027.5,402.5H1033.5A5,5 0 0 1 1038.5,407.5V515A5,5 0 0 1 1033.5,520H1027.5A5,5 0 0 1 1022.5,515V407.5A5,5 0 0 1 1027.5,402.5ZM1022.5,501.5H1005.5M1022.5,510.5H1005.5" fill="none" stroke="#a6a6a6" stroke-width="1"/><path d="M265.5,376.5V383M276.5,376.5V383M265.5,383A5.5,5.5 0 0 0 276.5,383M610.5,376.5V383M621.5,376.5V383M610.5,383A5.5,5.5 0 0 0 621.5,383M955.5,376.5V383M966.5,376.5V383M955.5,383A5.5,5.5 0 0 0 966.5,383" fill="none" stroke="#d4d4d4" stroke-width="1"/><path d="M596,474.5H637M616.5,454V494" stroke="#a00c0c" stroke-width="1.1"/><circle cx="616.5" cy="474.5" r="5.6" fill="none" stroke="#8c0a0a" stroke-width="1"/></svg>
<svg style="left:95px;top:132px" width="1043" height="23" viewBox="95 132 1043 23" font-family="Liberation Sans" font-size="9" fill="#1a1a1a"><rect x="105" y="148" width="1" height="7" fill="#5a5a5a"/><text x="105.5" y="141" text-anchor="middle">-1.5</text><rect x="139" y="148" width="1" height="7" fill="#5a5a5a"/><text x="139.5" y="141" text-anchor="middle">-1.4</text><rect x="173" y="148" width="1" height="7" fill="#5a5a5a"/><text x="173.5" y="141" text-anchor="middle">-1.3</text><rect x="207" y="148" width="1" height="7" fill="#5a5a5a"/><text x="207.5" y="141" text-anchor="middle">-1.2</text><rect x="241" y="148" width="1" height="7" fill="#5a5a5a"/><text x="241.5" y="141" text-anchor="middle">-1.1</text><rect x="275" y="148" width="1" height="7" fill="#5a5a5a"/><text x="275.5" y="141" text-anchor="middle">-1</text><rect x="309" y="148" width="1" height="7" fill="#5a5a5a"/><text x="309.5" y="141" text-anchor="middle">-0.9</text><rect x="343" y="148" width="1" height="7" fill="#5a5a5a"/><text x="343.5" y="141" text-anchor="middle">-0.8</text><rect x="378" y="148" width="1" height="7" fill="#5a5a5a"/><text x="378.5" y="141" text-anchor="middle">-0.7</text><rect x="412" y="148" width="1" height="7" fill="#5a5a5a"/><text x="412.5" y="141" text-anchor="middle">-0.6</text><rect x="446" y="148" width="1" height="7" fill="#5a5a5a"/><text x="446.5" y="141" text-anchor="middle">-0.5</text><rect x="480" y="148" width="1" height="7" fill="#5a5a5a"/><text x="480.5" y="141" text-anchor="middle">-0.4</text><rect x="514" y="148" width="1" height="7" fill="#5a5a5a"/><text x="514.5" y="141" text-anchor="middle">-0.3</text><rect x="548" y="148" width="1" height="7" fill="#5a5a5a"/><text x="548.5" y="141" text-anchor="middle">-0.2</text><rect x="582" y="148" width="1" height="7" fill="#5a5a5a"/><text x="582.5" y="141" text-anchor="middle">-0.1</text><rect x="616" y="148" width="1" height="7" fill="#5a5a5a"/><text x="616.5" y="141" text-anchor="middle">0</text><rect x="650" y="148" width="1" height="7" fill="#5a5a5a"/><text x="650.5" y="141" text-anchor="middle">0.1</text><rect x="684" y="148" width="1" height="7" fill="#5a5a5a"/><text x="684.5" y="141" text-anchor="middle">0.2</text><rect x="718" y="148" width="1" height="7" fill="#5a5a5a"/><text x="718.5" y="141" text-anchor="middle">0.3</text><rect x="752" y="148" width="1" height="7" fill="#5a5a5a"/><text x="752.5" y="141" text-anchor="middle">0.4</text><rect x="786" y="148" width="1" height="7" fill="#5a5a5a"/><text x="786.5" y="141" text-anchor="middle">0.5</text><rect x="820" y="148" width="1" height="7" fill="#5a5a5a"/><text x="820.5" y="141" text-anchor="middle">0.6</text><rect x="854" y="148" width="1" height="7" fill="#5a5a5a"/><text x="854.5" y="141" text-anchor="middle">0.7</text><rect x="889" y="148" width="1" height="7" fill="#5a5a5a"/><text x="889.5" y="141" text-anchor="middle">0.8</text><rect x="923" y="148" width="1" height="7" fill="#5a5a5a"/><text x="923.5" y="141" text-anchor="middle">0.9</text><rect x="957" y="148" width="1" height="7" fill="#5a5a5a"/><text x="957.5" y="141" text-anchor="middle">1</text><rect x="991" y="148" width="1" height="7" fill="#5a5a5a"/><text x="991.5" y="141" text-anchor="middle">1.1</text><rect x="1025" y="148" width="1" height="7" fill="#5a5a5a"/><text x="1025.5" y="141" text-anchor="middle">1.2</text><rect x="1059" y="148" width="1" height="7" fill="#5a5a5a"/><text x="1059.5" y="141" text-anchor="middle">1.3</text><rect x="1093" y="148" width="1" height="7" fill="#5a5a5a"/><text x="1093.5" y="141" text-anchor="middle">1.4</text><rect x="1127" y="148" width="1" height="7" fill="#5a5a5a"/><text x="1127.5" y="141" text-anchor="middle">1.5</text></svg>
<svg style="left:72px;top:155px" width="23" height="577" viewBox="72 155 23 577" font-family="Liberation Sans" font-size="9" fill="#1a1a1a"><rect x="88" y="712" width="7" height="1" fill="#5a5a5a"/><text x="0" y="0" text-anchor="middle" transform="translate(80.8,712.5) rotate(-90)">-0.7</text><rect x="88" y="678" width="7" height="1" fill="#5a5a5a"/><text x="0" y="0" text-anchor="middle" transform="translate(80.8,678.5) rotate(-90)">-0.6</text><rect x="88" y="644" width="7" height="1" fill="#5a5a5a"/><text x="0" y="0" text-anchor="middle" transform="translate(80.8,644.5) rotate(-90)">-0.5</text><rect x="88" y="610" width="7" height="1" fill="#5a5a5a"/><text x="0" y="0" text-anchor="middle" transform="translate(80.8,610.5) rotate(-90)">-0.4</text><rect x="88" y="576" width="7" height="1" fill="#5a5a5a"/><text x="0" y="0" text-anchor="middle" transform="translate(80.8,576.5) rotate(-90)">-0.3</text><rect x="88" y="542" width="7" height="1" fill="#5a5a5a"/><text x="0" y="0" text-anchor="middle" transform="translate(80.8,542.5) rotate(-90)">-0.2</text><rect x="88" y="508" width="7" height="1" fill="#5a5a5a"/><text x="0" y="0" text-anchor="middle" transform="translate(80.8,508.5) rotate(-90)">-0.1</text><rect x="88" y="474" width="7" height="1" fill="#5a5a5a"/><text x="0" y="0" text-anchor="middle" transform="translate(80.8,474.5) rotate(-90)">0</text><rect x="88" y="440" width="7" height="1" fill="#5a5a5a"/><text x="0" y="0" text-anchor="middle" transform="translate(80.8,440.5) rotate(-90)">0.1</text><rect x="88" y="406" width="7" height="1" fill="#5a5a5a"/><text x="0" y="0" text-anchor="middle" transform="translate(80.8,406.5) rotate(-90)">0.2</text><rect x="88" y="372" width="7" height="1" fill="#5a5a5a"/><text x="0" y="0" text-anchor="middle" transform="translate(80.8,372.5) rotate(-90)">0.3</text><rect x="88" y="338" width="7" height="1" fill="#5a5a5a"/><text x="0" y="0" text-anchor="middle" transform="translate(80.8,338.5) rotate(-90)">0.4</text><rect x="88" y="304" width="7" height="1" fill="#5a5a5a"/><text x="0" y="0" text-anchor="middle" transform="translate(80.8,304.5) rotate(-90)">0.5</text><rect x="88" y="269" width="7" height="1" fill="#5a5a5a"/><text x="0" y="0" text-anchor="middle" transform="translate(80.8,269.5) rotate(-90)">0.6</text><rect x="88" y="235" width="7" height="1" fill="#5a5a5a"/><text x="0" y="0" text-anchor="middle" transform="translate(80.8,235.5) rotate(-90)">0.7</text><rect x="88" y="201" width="7" height="1" fill="#5a5a5a"/><text x="0" y="0" text-anchor="middle" transform="translate(80.8,201.5) rotate(-90)">0.8</text><rect x="88" y="167" width="7" height="1" fill="#5a5a5a"/><text x="0" y="0" text-anchor="middle" transform="translate(80.8,167.5) rotate(-90)">0.9</text></svg>
<div class="a" style="left:1138px;top:155px;width:15px;height:577px;background:#f8f8f8;border-left:1px solid #efefef"></div>
<div class="a" style="left:1143px;top:286px;width:8px;height:314px;background:#7f7f7f;border-radius:4px"></div>
<div class="a" style="left:95px;top:732px;width:1058px;height:16px;background:#f8f8f8"></div>
<div class="a" style="left:280px;top:737px;width:631px;height:8px;background:#7f7f7f;border-radius:4px"></div>
<div class="a" style="left:1096px;top:733px;width:57px;height:15px;background:#e9e9e9;overflow:hidden"><div class="t" style="left:19px;top:1px;font-size:13.3px;color:#111">0.1 &lt; 1</div></div>
<div class="a" style="left:72px;top:748px;width:1081px;height:2px;background:#c9c9c9"></div>
<div class="a" style="left:72px;top:750px;width:1081px;height:21px;background:#fff;border-bottom:1px solid #c9c9c9"></div>
<div class="a" style="left:1143px;top:750px;width:8px;height:18px;background:#7f7f7f;border-radius:4px"></div>
<div class="t" style="left:76.5px;top:752px;font-size:13.5px;color:#1414cc"><i>Commande:</i> blockedit</div>
<div class="a" style="left:72px;top:771px;width:1081px;height:27px;background:#ececec"></div>
<div class="t" style="left:73px;top:779px;font-size:13.3px;color:#111">Commande :</div>
<div class="a" style="left:153px;top:776px;width:974px;height:18px;background:#fff"></div>
<div class="a" style="left:1127px;top:772px;width:26px;height:26px;background:linear-gradient(#e4e4e4,#f4f4f4);border:1px solid #a8a8a8"></div>
<svg style="left:1130px;top:776px" width="20" height="18" viewBox="1130 776 20 18"><rect x="1133.5" y="780.5" width="13.5" height="9" fill="#f2f2f2" stroke="#666" stroke-width="1"/><rect x="1133" y="780" width="14.5" height="3" fill="#000"/><circle cx="1143.5" cy="781.5" r="0.6" fill="#aaa"/></svg>
<div class="a" style="left:1155px;top:107px;width:300px;height:691px;background:#ececec"></div>
<div class="a" style="left:1154px;top:108px;width:301px;height:22px;background:linear-gradient(#ececec,#e2e2e2 60%,#d8d8d8)"></div>
<div class="a" style="left:1154px;top:129px;width:301px;height:1px;background:#cacaca"></div>
<div class="t" style="left:1282px;top:114px;font-size:11.3px;color:#3a3a3a;letter-spacing:0.4px">Liste des blocs</div>
<div class="a" style="left:1155px;top:130px;width:38px;height:26px;border:1px solid #b4b4b4;border-width:1px 1px 1px 1px;background:linear-gradient(#e4e4e4,#efefef 50%,#f5f5f5)"></div>
<div class="a" style="left:1193px;top:130px;width:37px;height:26px;border:1px solid #b4b4b4;border-width:1px 1px 1px 1px;background:linear-gradient(#e4e4e4,#efefef 50%,#f5f5f5)"></div>
<div class="a" style="left:1230px;top:130px;width:38px;height:26px;border:1px solid #b4b4b4;border-width:1px 1px 1px 1px;background:linear-gradient(#e4e4e4,#efefef 50%,#f5f5f5)"></div>
<div class="a" style="left:1268px;top:130px;width:37px;height:26px;border:1px solid #b4b4b4;border-width:1px 1px 1px 1px;background:linear-gradient(#e4e4e4,#efefef 50%,#f5f5f5)"></div>
<div class="a" style="left:1305px;top:130px;width:38px;height:26px;border:1px solid #b4b4b4;border-width:1px 1px 1px 1px;background:linear-gradient(#e4e4e4,#efefef 50%,#f5f5f5)"></div>
<div class="a" style="left:1343px;top:130px;width:37px;height:26px;border:1px solid #b4b4b4;border-width:1px 1px 1px 1px;background:linear-gradient(#e4e4e4,#efefef 50%,#f5f5f5)"></div>
<div class="a" style="left:1380px;top:130px;width:38px;height:26px;border:1px solid #b4b4b4;border-width:1px 1px 1px 1px;background:linear-gradient(#e4e4e4,#efefef 50%,#f5f5f5)"></div>
<div class="a" style="left:1418px;top:130px;width:37px;height:26px;border:1px solid #b4b4b4;border-width:1px 1px 1px 1px;background:linear-gradient(#e4e4e4,#efefef 50%,#f5f5f5)"></div>
<div class="a" style="left:1155px;top:155px;width:300px;height:153px;background:#fff;border-left:1px solid #c8c8c8;border-top:1px solid #b0b0b0;border-bottom:1px solid #b8b8b8"></div>
<div class="a" style="left:1156px;top:237px;width:299px;height:20px;background:#d4d4d4"></div>
<div class="t" style="left:1205px;top:160px;font-size:13px;color:#111;letter-spacing:0.2px">Model (*Model_Space)</div>
<div class="t" style="left:1205px;top:180px;font-size:13px;color:#111;letter-spacing:0.2px">Layout1 (*Paper_Space)</div>
<div class="t" style="left:1205px;top:200px;font-size:13px;color:#111;letter-spacing:0.2px">Arbre A</div>
<div class="t" style="left:1205px;top:220px;font-size:13px;color:#111;letter-spacing:0.2px">Arbre B</div>
<div class="t" style="left:1205px;top:240px;font-size:13px;color:#111;letter-spacing:0.2px">Banc</div>
<div class="t" style="left:1205px;top:260px;font-size:13px;color:#111;letter-spacing:0.2px">Poubelle</div>
<svg style="left:1150px;top:105px" width="305" height="200" viewBox="1150 105 305 200"><circle cx="1164" cy="118" r="7" fill="#6b6b6b"/><path d="M1161,115L1167,121M1167,115L1161,121" stroke="#fff" stroke-width="1.8" stroke-linecap="round"/><circle cx="1182" cy="118" r="7" fill="#6b6b6b"/><rect x="1180" y="114" width="5.5" height="4.2" fill="none" stroke="#fff" stroke-width="1"/><rect x="1178" y="116.5" width="5.5" height="4.5" fill="#6b6b6b" stroke="#fff" stroke-width="1"/><g transform="translate(1166.5,136.8) scale(1.0)" opacity="1.0"><path d="M0.3,6 C1.8,1.6 5,0.2 7.6,0.2 C10.6,0.2 13.6,1.6 15.2,6 C13.6,9.6 10.6,11 7.6,11 C5,11 1.8,9.6 0.3,6Z" fill="#000"/><path d="M2.5,3.9 C2.5,7.4 4.7,9.1 7.5,9.1 C10.3,9.1 12.6,7.4 12.6,3.9Z" fill="#fff"/><circle cx="7.4" cy="4.5" r="2.8" fill="#000"/><circle cx="6.5" cy="4.1" r="0.8" fill="#8a8a8a"/></g><g transform="translate(1203.8,136.8) scale(1.0)" opacity="1.0"><path d="M0.3,6 C1.8,1.6 5,0.2 7.6,0.2 C10.6,0.2 13.6,1.6 15.2,6 C13.6,9.6 10.6,11 7.6,11 C5,11 1.8,9.6 0.3,6Z" fill="#a8a8a8"/><path d="M2.5,3.9 C2.5,7.4 4.7,9.1 7.5,9.1 C10.3,9.1 12.6,7.4 12.6,3.9Z" fill="#fff"/><circle cx="7.4" cy="4.5" r="2.8" fill="#a8a8a8"/><circle cx="6.5" cy="4.1" r="0.8" fill="#8a8a8a"/></g><path d="M1248.5,137V148M1243,142.5H1254" stroke="#e00000" stroke-width="2.6"/><path d="M1280.5,142.5H1291.5" stroke="#e00000" stroke-width="2.6"/><text x="1323.5" y="147" font-family="Liberation Sans" font-size="12" text-anchor="middle" fill="#111">a b</text><path d="M1323.5,136V149" stroke="#111" stroke-width="0.9"/><path d="M1358.25,147.83L1368.98,137.42L1366.62,134.98L1355.89,145.39Z" fill="#dca446" stroke="#5f4012" stroke-width="0.7" stroke-linejoin="round"/><path d="M1366.69,139.65L1368.98,137.42L1366.62,134.98L1364.32,137.21Z" fill="#e42a2a" stroke="#8a1a10" stroke-width="0.6"/><path d="M1354.20,149.40L1358.25,147.83L1355.89,145.39Z" fill="#f1dc9c" stroke="#5f4012" stroke-width="0.6" stroke-linejoin="round"/><path d="M1354.20,149.40L1355.84,148.79L1354.86,147.78Z" fill="#3a2a10"/><rect x="1393.5" y="136.5" width="11" height="12" fill="#f1f1f1" stroke="#dadada" stroke-width="0.8"/><path d="M1395,138.6C1397,138.2 1400.2,138.4 1400.4,141V145" fill="none" stroke="#7393f2" stroke-width="2.4"/><path d="M1396.6,144L1404.2,144L1400.4,148.2Z" fill="#7393f2"/><rect x="1431.3" y="138.2" width="9.6" height="9.6" rx="0.8" fill="#eb7a46" stroke="#e0402a" stroke-width="1.1"/><path d="M1433.6,140.5L1438.6,145.5M1438.6,140.5L1433.6,145.5" stroke="#fff" stroke-width="1.6"/><g transform="translate(1161.5,161) scale(1.0)" opacity="1.0"><path d="M0.3,6 C1.8,1.6 5,0.2 7.6,0.2 C10.6,0.2 13.6,1.6 15.2,6 C13.6,9.6 10.6,11 7.6,11 C5,11 1.8,9.6 0.3,6Z" fill="#000"/><path d="M2.5,3.9 C2.5,7.4 4.7,9.1 7.5,9.1 C10.3,9.1 12.6,7.4 12.6,3.9Z" fill="#fff"/><circle cx="7.4" cy="4.5" r="2.8" fill="#000"/><circle cx="6.5" cy="4.1" r="0.8" fill="#8a8a8a"/></g><g transform="translate(1161.5,181) scale(1.0)" opacity="1.0"><path d="M0.3,6 C1.8,1.6 5,0.2 7.6,0.2 C10.6,0.2 13.6,1.6 15.2,6 C13.6,9.6 10.6,11 7.6,11 C5,11 1.8,9.6 0.3,6Z" fill="#000"/><path d="M2.5,3.9 C2.5,7.4 4.7,9.1 7.5,9.1 C10.3,9.1 12.6,7.4 12.6,3.9Z" fill="#fff"/><circle cx="7.4" cy="4.5" r="2.8" fill="#000"/><circle cx="6.5" cy="4.1" r="0.8" fill="#8a8a8a"/></g><g transform="translate(1161.5,201) scale(1.0)" opacity="1.0"><path d="M0.3,6 C1.8,1.6 5,0.2 7.6,0.2 C10.6,0.2 13.6,1.6 15.2,6 C13.6,9.6 10.6,11 7.6,11 C5,11 1.8,9.6 0.3,6Z" fill="#000"/><path d="M2.5,3.9 C2.5,7.4 4.7,9.1 7.5,9.1 C10.3,9.1 12.6,7.4 12.6,3.9Z" fill="#fff"/><circle cx="7.4" cy="4.5" r="2.8" fill="#000"/><circle cx="6.5" cy="4.1" r="0.8" fill="#8a8a8a"/></g><g transform="translate(1161.5,221) scale(1.0)" opacity="1.0"><path d="M0.3,6 C1.8,1.6 5,0.2 7.6,0.2 C10.6,0.2 13.6,1.6 15.2,6 C13.6,9.6 10.6,11 7.6,11 C5,11 1.8,9.6 0.3,6Z" fill="#000"/><path d="M2.5,3.9 C2.5,7.4 4.7,9.1 7.5,9.1 C10.3,9.1 12.6,7.4 12.6,3.9Z" fill="#fff"/><circle cx="7.4" cy="4.5" r="2.8" fill="#000"/><circle cx="6.5" cy="4.1" r="0.8" fill="#8a8a8a"/></g><g transform="translate(1161.5,241) scale(1.0)" opacity="1.0"><path d="M0.3,6 C1.8,1.6 5,0.2 7.6,0.2 C10.6,0.2 13.6,1.6 15.2,6 C13.6,9.6 10.6,11 7.6,11 C5,11 1.8,9.6 0.3,6Z" fill="#2d3c4c"/><path d="M2.5,3.9 C2.5,7.4 4.7,9.1 7.5,9.1 C10.3,9.1 12.6,7.4 12.6,3.9Z" fill="#fff"/><circle cx="7.4" cy="4.5" r="2.8" fill="#2d3c4c"/><circle cx="6.5" cy="4.1" r="0.8" fill="#8a8a8a"/></g><g transform="translate(1161.5,261) scale(1.0)" opacity="1.0"><path d="M0.3,6 C1.8,1.6 5,0.2 7.6,0.2 C10.6,0.2 13.6,1.6 15.2,6 C13.6,9.6 10.6,11 7.6,11 C5,11 1.8,9.6 0.3,6Z" fill="#000"/><path d="M2.5,3.9 C2.5,7.4 4.7,9.1 7.5,9.1 C10.3,9.1 12.6,7.4 12.6,3.9Z" fill="#fff"/><circle cx="7.4" cy="4.5" r="2.8" fill="#000"/><circle cx="6.5" cy="4.1" r="0.8" fill="#8a8a8a"/></g><g opacity="0.75"><path d="M1188.89,251.73L1198.56,242.06L1196.44,239.94L1186.77,249.61Z" fill="#dca446" stroke="#5f4012" stroke-width="0.7" stroke-linejoin="round"/><path d="M1196.30,244.32L1198.56,242.06L1196.44,239.94L1194.18,242.20Z" fill="#e42a2a" stroke="#8a1a10" stroke-width="0.6"/><path d="M1185.00,253.50L1188.89,251.73L1186.77,249.61Z" fill="#f1dc9c" stroke="#5f4012" stroke-width="0.6" stroke-linejoin="round"/><path d="M1185.00,253.50L1186.63,252.86L1185.64,251.87Z" fill="#3a2a10"/></g></svg>
<div class="a" style="left:1154px;top:308px;width:301px;height:23px;background:linear-gradient(#ececec,#e2e2e2 60%,#d8d8d8)"></div>
<div class="a" style="left:1154px;top:330px;width:301px;height:1px;background:#cacaca"></div>
<div class="t" style="left:1276px;top:315px;font-size:11.3px;color:#3a3a3a;letter-spacing:0.45px">Liste des calques</div>
<div class="a" style="left:1155px;top:331px;width:60px;height:26px;border:1px solid #b4b4b4;background:linear-gradient(#e4e4e4,#efefef 50%,#f5f5f5)"></div>
<div class="a" style="left:1215px;top:331px;width:60px;height:26px;border:1px solid #b4b4b4;background:linear-gradient(#e4e4e4,#efefef 50%,#f5f5f5)"></div>
<div class="a" style="left:1275px;top:331px;width:60px;height:26px;border:1px solid #b4b4b4;background:linear-gradient(#e4e4e4,#efefef 50%,#f5f5f5)"></div>
<div class="a" style="left:1335px;top:331px;width:60px;height:26px;border:1px solid #b4b4b4;background:linear-gradient(#e4e4e4,#efefef 50%,#f5f5f5)"></div>
<div class="a" style="left:1395px;top:331px;width:60px;height:26px;border:1px solid #b4b4b4;background:linear-gradient(#e4e4e4,#efefef 50%,#f5f5f5)"></div>
<div class="a" style="left:1155px;top:356px;width:300px;height:442px;background:#fff;border-left:1px solid #c8c8c8;border-top:1px solid #b0b0b0"></div>
<div class="a" style="left:1156px;top:378px;width:299px;height:20px;background:#0b50d7"></div>
<div class="a" style="left:1160px;top:364px;width:17px;height:9px;background:#ffffff;border:1px solid #111"></div>
<div class="t" style="left:1183px;top:362px;font-size:13px;color:#111;letter-spacing:0.2px">0</div>
<div class="a" style="left:1160px;top:384px;width:17px;height:9px;background:#c8b68a;border:1px solid #111"></div>
<div class="t" style="left:1183px;top:382px;font-size:13px;color:#fff;letter-spacing:0.2px">Chemins</div>
<div class="a" style="left:1160px;top:404px;width:17px;height:9px;background:#c4c4c4;border:1px solid #111"></div>
<div class="t" style="left:1183px;top:402px;font-size:13px;color:#111;letter-spacing:0.2px">Installations</div>
<div class="a" style="left:1160px;top:424px;width:17px;height:9px;background:#5d9c2c;border:1px solid #111"></div>
<div class="t" style="left:1183px;top:422px;font-size:13px;color:#111;letter-spacing:0.2px">Plantes</div>
<svg style="left:1150px;top:305px" width="305" height="140" viewBox="1150 305 305 140"><circle cx="1164" cy="319.5" r="7" fill="#6b6b6b"/><path d="M1161,316.5L1167,322.5M1167,316.5L1161,322.5" stroke="#fff" stroke-width="1.8" stroke-linecap="round"/><circle cx="1182" cy="319.5" r="7" fill="#6b6b6b"/><rect x="1180" y="315.5" width="5.5" height="4.2" fill="none" stroke="#fff" stroke-width="1"/><rect x="1178" y="318.0" width="5.5" height="4.5" fill="#6b6b6b" stroke="#fff" stroke-width="1"/><g transform="translate(1177,338) scale(1.0)" opacity="1.0"><path d="M0.3,6 C1.8,1.6 5,0.2 7.6,0.2 C10.6,0.2 13.6,1.6 15.2,6 C13.6,9.6 10.6,11 7.6,11 C5,11 1.8,9.6 0.3,6Z" fill="#000"/><path d="M2.5,3.9 C2.5,7.4 4.7,9.1 7.5,9.1 C10.3,9.1 12.6,7.4 12.6,3.9Z" fill="#fff"/><circle cx="7.4" cy="4.5" r="2.8" fill="#000"/><circle cx="6.5" cy="4.1" r="0.8" fill="#8a8a8a"/></g><g transform="translate(1237.5,338) scale(1.0)" opacity="1.0"><path d="M0.3,6 C1.8,1.6 5,0.2 7.6,0.2 C10.6,0.2 13.6,1.6 15.2,6 C13.6,9.6 10.6,11 7.6,11 C5,11 1.8,9.6 0.3,6Z" fill="#a8a8a8"/><path d="M2.5,3.9 C2.5,7.4 4.7,9.1 7.5,9.1 C10.3,9.1 12.6,7.4 12.6,3.9Z" fill="#fff"/><circle cx="7.4" cy="4.5" r="2.8" fill="#a8a8a8"/><circle cx="6.5" cy="4.1" r="0.8" fill="#8a8a8a"/></g><path d="M1304.5,338V349M1299,343.5H1310" stroke="#e00000" stroke-width="2.6"/><path d="M1358.5,343.5H1370.5" stroke="#e00000" stroke-width="2.6"/><path d="M1422.25,349.03L1432.98,338.62L1430.62,336.18L1419.89,346.59Z" fill="#dca446" stroke="#5f4012" stroke-width="0.7" stroke-linejoin="round"/><path d="M1430.69,340.85L1432.98,338.62L1430.62,336.18L1428.32,338.41Z" fill="#e42a2a" stroke="#8a1a10" stroke-width="0.6"/><path d="M1418.20,350.60L1422.25,349.03L1419.89,346.59Z" fill="#f1dc9c" stroke="#5f4012" stroke-width="0.6" stroke-linejoin="round"/><path d="M1418.20,350.60L1419.84,349.99L1418.86,348.98Z" fill="#3a2a10"/><g transform="translate(1415,362.5) scale(1.0)" opacity="1.0"><path d="M0.3,6 C1.8,1.6 5,0.2 7.6,0.2 C10.6,0.2 13.6,1.6 15.2,6 C13.6,9.6 10.6,11 7.6,11 C5,11 1.8,9.6 0.3,6Z" fill="#000"/><path d="M2.5,3.9 C2.5,7.4 4.7,9.1 7.5,9.1 C10.3,9.1 12.6,7.4 12.6,3.9Z" fill="#fff"/><circle cx="7.4" cy="4.5" r="2.8" fill="#000"/><circle cx="6.5" cy="4.1" r="0.8" fill="#8a8a8a"/></g><path d="M1441.7,366.5V365.0A3.3,3.3 0 0 1 1448.3,365.0V366.5" fill="none" stroke="#c4c4c4" stroke-width="1.5"/><rect x="1439.5" y="366.5" width="11" height="8" rx="0.8" fill="#c4c4c4"/><g transform="translate(1415,382.5) scale(1.0)" opacity="1.0"><path d="M0.3,6 C1.8,1.6 5,0.2 7.6,0.2 C10.6,0.2 13.6,1.6 15.2,6 C13.6,9.6 10.6,11 7.6,11 C5,11 1.8,9.6 0.3,6Z" fill="#203563"/><path d="M2.5,3.9 C2.5,7.4 4.7,9.1 7.5,9.1 C10.3,9.1 12.6,7.4 12.6,3.9Z" fill="#2f4f9a"/><circle cx="7.4" cy="4.5" r="2.8" fill="#203563"/><circle cx="6.5" cy="4.1" r="0.8" fill="#8a8a8a"/></g><path d="M1441.7,386.5V385.0A3.3,3.3 0 0 1 1448.3,385.0V386.5" fill="none" stroke="#a9bde0" stroke-width="1.5"/><rect x="1439.5" y="386.5" width="11" height="8" rx="0.8" fill="#a9bde0"/><path d="M1398.89,392.23L1409.06,382.06L1406.94,379.94L1396.77,390.11Z" fill="#dca446" stroke="#5f4012" stroke-width="0.7" stroke-linejoin="round"/><path d="M1406.80,384.32L1409.06,382.06L1406.94,379.94L1404.68,382.20Z" fill="#e42a2a" stroke="#8a1a10" stroke-width="0.6"/><path d="M1395.00,394.00L1398.89,392.23L1396.77,390.11Z" fill="#f1dc9c" stroke="#5f4012" stroke-width="0.6" stroke-linejoin="round"/><path d="M1395.00,394.00L1396.63,393.36L1395.64,392.37Z" fill="#3a2a10"/><g transform="translate(1415,402.5) scale(1.0)" opacity="1.0"><path d="M0.3,6 C1.8,1.6 5,0.2 7.6,0.2 C10.6,0.2 13.6,1.6 15.2,6 C13.6,9.6 10.6,11 7.6,11 C5,11 1.8,9.6 0.3,6Z" fill="#000"/><path d="M2.5,3.9 C2.5,7.4 4.7,9.1 7.5,9.1 C10.3,9.1 12.6,7.4 12.6,3.9Z" fill="#fff"/><circle cx="7.4" cy="4.5" r="2.8" fill="#000"/><circle cx="6.5" cy="4.1" r="0.8" fill="#8a8a8a"/></g><path d="M1441.7,406.5V405.0A3.3,3.3 0 0 1 1448.3,405.0V406.5" fill="none" stroke="#c4c4c4" stroke-width="1.5"/><rect x="1439.5" y="406.5" width="11" height="8" rx="0.8" fill="#c4c4c4"/><g transform="translate(1415,422.5) scale(1.0)" opacity="1.0"><path d="M0.3,6 C1.8,1.6 5,0.2 7.6,0.2 C10.6,0.2 13.6,1.6 15.2,6 C13.6,9.6 10.6,11 7.6,11 C5,11 1.8,9.6 0.3,6Z" fill="#000"/><path d="M2.5,3.9 C2.5,7.4 4.7,9.1 7.5,9.1 C10.3,9.1 12.6,7.4 12.6,3.9Z" fill="#fff"/><circle cx="7.4" cy="4.5" r="2.8" fill="#000"/><circle cx="6.5" cy="4.1" r="0.8" fill="#8a8a8a"/></g><path d="M1441.7,426.5V425.0A3.3,3.3 0 0 1 1448.3,425.0V426.5" fill="none" stroke="#c4c4c4" stroke-width="1.5"/><rect x="1439.5" y="426.5" width="11" height="8" rx="0.8" fill="#c4c4c4"/></svg>
<svg style="left:1140px;top:195px" width="100" height="100" viewBox="1140 195 100 100">
<defs><radialGradient id="cg" cx="0.5" cy="0.5" r="0.5"><stop offset="0.84" stop-color="#c6d4e2" stop-opacity="0"/><stop offset="0.89" stop-color="#c6d4e2" stop-opacity="0.5"/><stop offset="0.95" stop-color="#9fb5ca" stop-opacity="0.8"/><stop offset="0.985" stop-color="#8aa3bb" stop-opacity="0.75"/><stop offset="1" stop-color="#8aa3bb" stop-opacity="0"/></radialGradient></defs>
<circle cx="1187.1" cy="244.5" r="39.5" fill="url(#cg)"/>
<path d="M1187.1,244.8L1202,260.2L1196.2,260.8L1201,270.4L1198.3,272L1193,261.3L1187.1,266.6Z" fill="#fff" stroke="#000" stroke-width="1.2" stroke-linejoin="miter"/>
</svg>
<div class="a" style="left:1454px;top:107px;width:46px;height:691px;background:linear-gradient(90deg,#d0d0d0 0,#d0d0d0 1px,#f6f6f6 1px,#f3f3f3 2px,#ececec 3px,#c9c9c9 43.5px,#bababa 44px,#bababa 46px)"></div>
<div class="hdlh" style="left:1461px;top:116px;width:30px"></div>
<div class="pressed" style="left:1456px;top:120px;width:43px;height:42px;border-radius:6px"></div>
<div class="pressed" style="left:1456px;top:167px;width:43px;height:42px;border-radius:6px"></div>
<div class="pressed" style="left:1456px;top:418px;width:43px;height:43px;border-radius:6px"></div>
<div class="seph" style="left:1457px;top:262px;width:42px"></div>
<div class="seph" style="left:1457px;top:410px;width:42px"></div>
<svg style="left:1455px;top:120px" width="45" height="385" viewBox="1455 120 45 385"><rect x="1463.7" y="127.7" width="26.8" height="26.8" fill="#fff" stroke="#555" stroke-width="1.1"/><rect x="1463.2" y="127.2" width="27.8" height="4.6" fill="#000"/><rect x="1464.2" y="128.2" width="3" height="2.8" fill="#fff"/><path d="M1471,141L1480,137V148L1471,152Z" fill="#999" stroke="#444" stroke-width="0.8"/><path d="M1474,140L1484,136V147L1474,151Z" fill="#eee" stroke="#444" stroke-width="0.8"/><path d="M1477,147L1480,140L1482,146Z" fill="none" stroke="#e03030" stroke-width="0.9"/><rect x="1463.7" y="174.7" width="26.8" height="26.8" fill="#fff" stroke="#555" stroke-width="1.1"/><rect x="1463.2" y="174.2" width="27.8" height="4.6" fill="#000"/><rect x="1464.2" y="175.2" width="3" height="2.8" fill="#fff"/><rect x="1470.5" y="183.5" width="10" height="8" fill="#f3e7b6" stroke="#444" stroke-width="0.8"/><circle cx="1480" cy="192" r="4.8" fill="#f3e7b6" fill-opacity="0.85" stroke="#444" stroke-width="0.8"/><rect x="1463.7" y="221.7" width="26.8" height="26.8" fill="#fff" stroke="#555" stroke-width="1.1"/><rect x="1463.2" y="221.2" width="27.8" height="4.6" fill="#000"/><rect x="1464.2" y="222.2" width="3" height="2.8" fill="#fff"/><rect x="1469.5" y="232.5" width="16" height="11" rx="2" fill="#f4f4f4" stroke="#b8c8e8" stroke-width="1"/><rect x="1463.7" y="276.7" width="26.8" height="26.8" fill="#fff" stroke="#555" stroke-width="1.1"/><rect x="1463.2" y="276.2" width="27.8" height="4.6" fill="#000"/><rect x="1464.2" y="277.2" width="3" height="2.8" fill="#fff"/><rect x="1467" y="285" width="3.5" height="3" fill="#000"/><rect x="1467" y="291" width="3.5" height="3" fill="#000"/><rect x="1467" y="297" width="3.5" height="3" fill="#000"/><rect x="1472.5" y="284.5" width="15" height="4" fill="none" stroke="#333" stroke-width="0.8"/><rect x="1472.5" y="290.5" width="15" height="4" fill="none" stroke="#333" stroke-width="0.8"/><rect x="1472.5" y="296.5" width="15" height="4" fill="none" stroke="#333" stroke-width="0.8"/><rect x="1463.7" y="322.7" width="26.8" height="26.8" fill="#fff" stroke="#555" stroke-width="1.1"/><rect x="1463.2" y="322.2" width="27.8" height="4.6" fill="#000"/><rect x="1464.2" y="323.2" width="3" height="2.8" fill="#fff"/><path d="M1470,332H1485L1479.5,339V346L1476,344.5V339Z" fill="#ddd" stroke="#444" stroke-width="0.9"/><rect x="1463.7" y="369.7" width="26.8" height="26.8" fill="#fff" stroke="#555" stroke-width="1.1"/><rect x="1463.2" y="369.2" width="27.8" height="4.6" fill="#000"/><rect x="1464.2" y="370.2" width="3" height="2.8" fill="#fff"/><path d="M1469,376V392L1475,387V381Z" fill="#fff" stroke="#333" stroke-width="0.9"/><rect x="1475" y="380.5" width="9" height="7" rx="1.5" fill="#aaa"/><path d="M1467,384H1487" stroke="#e06060" stroke-width="0.8" stroke-dasharray="1.5,1"/><rect x="1463.7" y="425.7" width="26.8" height="26.8" fill="#fff" stroke="#555" stroke-width="1.1"/><rect x="1463.2" y="425.2" width="27.8" height="4.6" fill="#000"/><rect x="1464.2" y="426.2" width="3" height="2.8" fill="#fff"/><path d="M1466,434.2H1478M1466,437.5H1476M1466,440.8H1479M1466,444.1H1480" stroke="#8a8a8a" stroke-width="0.9" stroke-dasharray="2,0.6"/><path d="M1464,448.8H1491" stroke="#444" stroke-width="0.8"/><path d="M1466.5,450.5H1468.5M1472,450.5H1488" stroke="#666" stroke-width="1.2" stroke-dasharray="1.5,0.5"/><rect x="1463.7" y="471.7" width="26.8" height="26.8" fill="#fff" stroke="#555" stroke-width="1.1"/><rect x="1463.2" y="471.2" width="27.8" height="4.6" fill="#000"/><rect x="1464.2" y="472.2" width="3" height="2.8" fill="#fff"/><rect x="1471.5" y="481" width="12" height="14.5" rx="1" fill="#c8882a"/><rect x="1473" y="482.5" width="9" height="11.5" fill="#fafafa"/><rect x="1474.5" y="479.5" width="6" height="2.5" fill="#888"/><path d="M1474.5,486H1480.5M1474.5,488H1480.5M1474.5,490H1479" stroke="#bbb" stroke-width="0.6"/></svg>
<div id="status" class="a"></div>
<div class="a" style="left:0;top:798px;width:1500px;height:1px;background:#cdcdcd"></div>
<div class="t st" style="left:2px;top:809px">47.0937,12.7851</div>
<div class="t st" style="left:2px;top:829px">@47.0937,12.7851</div>
<div class="a" style="left:253px;top:802px;width:1px;height:42px;background:#8a8a8a"></div>
<div class="t st" style="left:256px;top:809px">48.7984&lt;15°</div>
<div class="t st" style="left:256px;top:829px">@48.7984&lt;15°</div>
<div class="a" style="left:506px;top:819px;width:6px;height:6px;border-radius:3px;background:#c4c4c4"></div>
<div class="t st" style="left:532px;top:818px;letter-spacing:0.12px">Sélectionne une entité ou une région</div>
<svg style="left:714px;top:803px" width="24" height="36" viewBox="714 803 24 36"><path d="M717.5,815A8.5,9 0 0 1 734.5,815V826.5A8.5,9 0 0 1 717.5,826.5Z" fill="#fff" stroke="#444" stroke-width="1"/><path d="M717.5,819.5Q726,817.3 734.5,819.5" fill="none" stroke="#333" stroke-width="1.6"/><path d="M726,806.5V818.5" stroke="#333" stroke-width="1.2"/><rect x="724.4" y="808.7" width="3.2" height="6.8" rx="1.2" fill="#fff" stroke="#333" stroke-width="1"/></svg>
<div class="a" style="left:940px;top:819px;width:6px;height:6px;border-radius:3px;background:#c4c4c4"></div>
<div class="t st" style="left:949px;top:818px;letter-spacing:0.12px">Aucune des entités sélectionnées.</div>
<div class="a" style="left:1269px;top:819px;width:6px;height:6px;border-radius:3px;background:#c4c4c4"></div>
</body></html>
